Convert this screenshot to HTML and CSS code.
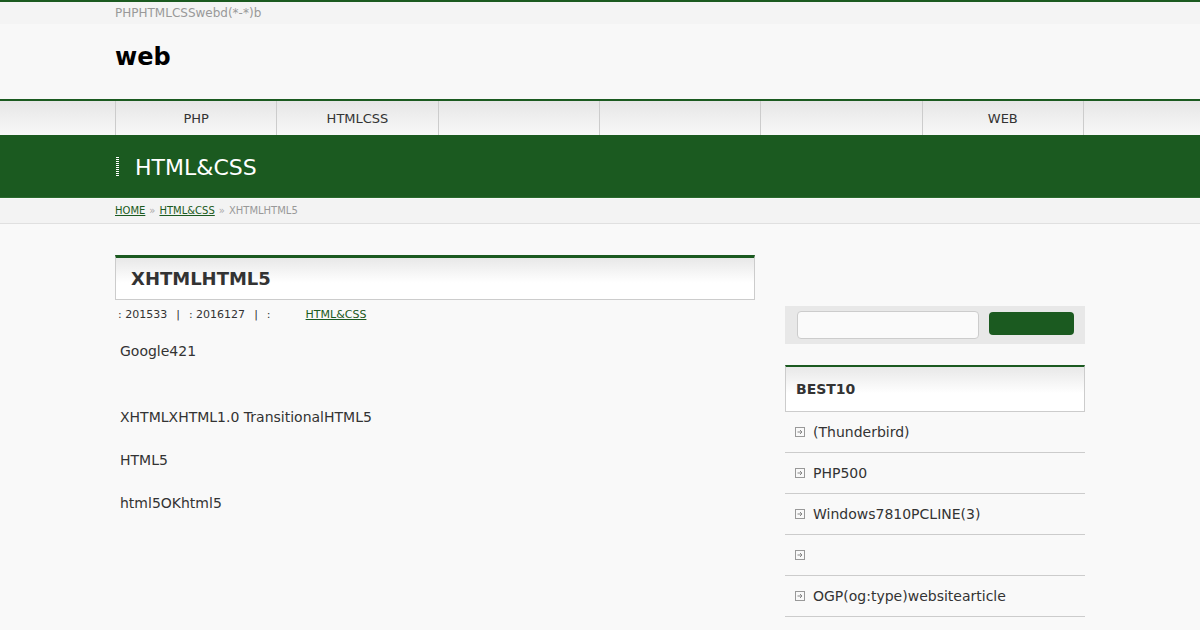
FILE: index.html
```html
<!DOCTYPE html>
<html>
<head>
    <meta charset="utf-8">
    <title>web</title>
    <link rel="stylesheet" href="styles.css">
</head>
<body>
    <div id="top-bar">
        <div class="inner">
            <p class="tagline">PHPHTMLCSSwebd(*-*)b</p>
        </div>
    </div>
    <header id="header">
        <div class="inner">
            <h1 class="site-title">web</h1>
        </div>
    </header>
    <nav id="global-nav">
        <ul class="inner">
            <li><a href="#">PHP</a></li>
            <li><a href="#">HTMLCSS</a></li>
            <li><a href="#"></a></li>
            <li><a href="#"></a></li>
            <li><a href="#"></a></li>
            <li><a href="#">WEB</a></li>
        </ul>
    </nav>
    <div id="page-title">
        <div class="inner">
            <h2><span class="bar"></span>HTML&amp;CSS</h2>
        </div>
    </div>
    <div id="breadcrumb">
        <div class="inner">
            <a href="#">HOME</a><span class="sep">»</span><a href="#">HTML&amp;CSS</a><span class="sep">»</span><span class="current">XHTMLHTML5</span>
        </div>
    </div>

    <div id="main" class="inner">
        <article id="content">
            <h1 class="entry-title">XHTMLHTML5</h1>
            <div class="entry-meta">
                <span>: 201533</span><span class="sep">|</span><span>: 2016127</span><span class="sep">|</span><span>:</span><a href="#">HTML&amp;CSS</a>
            </div>
            <div class="entry-body">
                <p>Google421</p>
                <p class="spacer"></p>
                <p>XHTMLXHTML1.0 TransitionalHTML5</p>
                <p>HTML5</p>
                <p>html5OKhtml5</p>
            </div>
        </article>

        <aside id="sidebar">
            <form class="search-box">
                <input type="text">
                <button type="submit"></button>
            </form>
            <div class="widget">
                <h3 class="widget-title">BEST10</h3>
                <ul class="ranking">
                    <li><svg class="ico" width="10" height="10" viewBox="0 0 10 10"><rect x="0.5" y="0.5" width="9" height="9" fill="none" stroke="#999"/><path d="M2.5 5h4M5 3l2 2-2 2" fill="none" stroke="#888"/></svg><a href="#">(Thunderbird)</a></li>
                    <li><svg class="ico" width="10" height="10" viewBox="0 0 10 10"><rect x="0.5" y="0.5" width="9" height="9" fill="none" stroke="#999"/><path d="M2.5 5h4M5 3l2 2-2 2" fill="none" stroke="#888"/></svg><a href="#">PHP500</a></li>
                    <li><svg class="ico" width="10" height="10" viewBox="0 0 10 10"><rect x="0.5" y="0.5" width="9" height="9" fill="none" stroke="#999"/><path d="M2.5 5h4M5 3l2 2-2 2" fill="none" stroke="#888"/></svg><a href="#">Windows7810PCLINE(3)</a></li>
                    <li><svg class="ico" width="10" height="10" viewBox="0 0 10 10"><rect x="0.5" y="0.5" width="9" height="9" fill="none" stroke="#999"/><path d="M2.5 5h4M5 3l2 2-2 2" fill="none" stroke="#888"/></svg><a href="#"></a></li>
                    <li><svg class="ico" width="10" height="10" viewBox="0 0 10 10"><rect x="0.5" y="0.5" width="9" height="9" fill="none" stroke="#999"/><path d="M2.5 5h4M5 3l2 2-2 2" fill="none" stroke="#888"/></svg><a href="#">OGP(og:type)websitearticle</a></li>
                </ul>
            </div>
        </aside>
    </div>
</body>
</html>
```

FILE: styles.css
```css
body {
    margin: 0;
    font-family: "DejaVu Sans", Verdana, sans-serif;
    background-color: #f9f9f9;
    color: #333;
}

a {
    color: #333;
}

.inner {
    width: 970px;
    margin: 0 auto;
    padding: 0;
    box-sizing: border-box;
}

/* ヘッダー */
#top-bar {
    border-top: 2px solid #1b5a20;
    background-color: #f4f4f4;
    height: 22px;
}

.tagline {
    margin: 0;
    font-size: 12px;
    line-height: 22px;
    color: #999;
}

#header {
    height: 75px;
    background-color: #f8f8f8;
    border-bottom: 2px solid #1b5a20;
}

.site-title {
    margin: 0;
    padding-top: 18px;
    font-size: 24px;
    line-height: 30px;
    color: #000;
}

#global-nav {
    height: 34px;
    background: linear-gradient(#e6e6e6, #f8f8f8);
}

#global-nav ul {
    display: flex;
    list-style: none;
    height: 34px;
    border-right: 1px solid #ccc;
    width: 969px;
    margin-left: calc(50% - 485px);
}

#global-nav li {
    flex: 1;
    border-left: 1px solid #ccc;
}

#global-nav a {
    display: block;
    padding-top: 1px;
    line-height: 34px;
    font-size: 13px;
    text-align: center;
    text-decoration: none;
    color: #333;
}

/* カテゴリタイトル */
#page-title {
    height: 62px;
    background-color: #1b5a20;
    border-bottom: 1px solid #2a6a2e;
}

#page-title h2 {
    margin: 0;
    display: flex;
    align-items: center;
    height: 62px;
    padding-top: 2px;
    box-sizing: border-box;
    font-size: 22px;
    font-weight: normal;
    color: #fff;
}

#page-title .bar {
    width: 3px;
    height: 20px;
    margin-left: 1px;
    margin-right: 16px;
    background: repeating-linear-gradient(#fff 0 1px, #1b5a20 1px 2px);
}

#breadcrumb {
    height: 24px;
    margin-top: 1px;
    background-color: #f3f3f3;
    border-bottom: 1px solid #e0e0e0;
    font-size: 10px;
    line-height: 23px;
}

#breadcrumb a {
    color: #1b5a20;
}

#breadcrumb .sep {
    margin: 0 4px;
    color: #aaa;
}

#breadcrumb .current {
    color: #999;
}

/* メイン */
#main {
    display: flex;
    justify-content: space-between;
    padding-top: 31px;
}

#content {
    width: 640px;
}

.entry-title {
    margin: 0;
    border-top: 3px solid #1b5a20;
    border-left: 1px solid #ccc;
    border-right: 1px solid #ccc;
    border-bottom: 1px solid #ccc;
    background: linear-gradient(#e8e8e8, #fff 60%, #fff);
    padding: 0 15px;
    height: 41px;
    line-height: 41px;
    font-size: 18px;
    color: #333;
}

.entry-meta {
    margin-top: 8px;
    padding-left: 3px;
    font-size: 11px;
    line-height: 14px;
    color: #333;
}

.entry-meta .sep {
    margin: 0 9px;
}

.entry-meta a {
    margin-left: 35px;
    color: #1b5a20;
}

.entry-body {
    padding: 19px 5px 0;
    font-size: 14px;
}

.entry-body p {
    margin: 0 0 23px;
    line-height: 20px;
}

.entry-body .spacer {
    height: 23px;
    margin: 0;
}

/* サイドバー */
#sidebar {
    width: 300px;
    padding-top: 51px;
}

.search-box {
    display: flex;
    align-items: center;
    height: 38px;
    padding: 0 11px 0 12px;
    background-color: #e8e8e8;
}

.search-box input[type="text"] {
    width: 182px;
    height: 28px;
    box-sizing: border-box;
    border: 1px solid #ccc;
    border-radius: 4px;
    background-color: #fafafa;
}

.search-box button {
    width: 86px;
    height: 23px;
    margin-left: 10px;
    border: none;
    border-radius: 4px;
    background-color: #1b5a20;
    margin-top: -4px;
}

.widget {
    margin-top: 21px;
}

.widget-title {
    margin: 0;
    border-top: 2px solid #1b5a20;
    border-left: 1px solid #ccc;
    border-right: 1px solid #ccc;
    border-bottom: 1px solid #ccc;
    background: linear-gradient(#e8e8e8, #fff 60%, #fff);
    padding: 0 10px;
    height: 44px;
    line-height: 45px;
    font-size: 14px;
}

.ranking {
    list-style: none;
    margin: 0;
    padding: 0;
}

.ranking li {
    display: flex;
    align-items: center;
    height: 40px;
    border-bottom: 1px solid #ccc;
    padding-left: 10px;
    font-size: 14px;
}

.ranking .ico {
    margin-right: 8px;
}

.ranking a {
    text-decoration: none;
    color: #333;
}
```
